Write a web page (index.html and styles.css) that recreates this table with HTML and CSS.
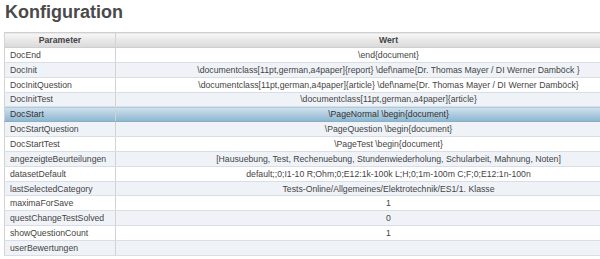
FILE: index.html
```html
<!DOCTYPE html>
<html lang="de">
<head>
<meta charset="utf-8">
<title>Konfiguration</title>
<link rel="stylesheet" href="styles.css">
</head>
<body>
<h1 class="title">Konfiguration</h1>
<div class="table-clip">
<table class="config">
  <thead>
    <tr><th class="col-param">Parameter</th><th class="col-value">Wert</th></tr>
  </thead>
  <tbody>
    <tr><td>DocEnd</td><td>\end{document}</td></tr>
    <tr><td>DocInit</td><td>\documentclass[11pt,german,a4paper]{report} \def\name{Dr. Thomas Mayer / DI Werner Damböck }</td></tr>
    <tr><td>DocInitQuestion</td><td>\documentclass[11pt,german,a4paper]{article} \def\name{Dr. Thomas Mayer / DI Werner Damböck}</td></tr>
    <tr><td>DocInitTest</td><td>\documentclass[11pt,german,a4paper]{article}</td></tr>
    <tr class="selected"><td>DocStart</td><td>\PageNormal \begin{document}</td></tr>
    <tr><td>DocStartQuestion</td><td>\PageQuestion \begin{document}</td></tr>
    <tr><td>DocStartTest</td><td>\PageTest \begin{document}</td></tr>
    <tr><td>angezeigteBeurteilungen</td><td>[Hausuebung, Test, Rechenuebung, Stundenwiederholung, Schularbeit, Mahnung, Noten]</td></tr>
    <tr><td>datasetDefault</td><td>default;;0;I1-10 R;Ohm;0;E12:1k-100k L;H;0;1m-100m C;F;0;E12:1n-100n</td></tr>
    <tr><td>lastSelectedCategory</td><td>Tests-Online/Allgemeines/Elektrotechnik/ES1/1. Klasse</td></tr>
    <tr><td>maximaForSave</td><td>1</td></tr>
    <tr><td>questChangeTestSolved</td><td>0</td></tr>
    <tr><td>showQuestionCount</td><td>1</td></tr>
    <tr><td>userBewertungen</td><td></td></tr>
  </tbody>
</table>
</div>
</body>
</html>
```
FILE: styles.css
```css
html, body {
  overflow: hidden;
}
body {
  margin: 0;
  padding: 0 0 0 4px;
  font-family: "Liberation Sans", Arial, sans-serif;
  color: #444;
  background: #fff;
}
.title {
  margin: 0;
  padding: 2px 0 0 1px;
  height: 32px;
  box-sizing: border-box;
  font-size: 18px;
  line-height: 20px;
  font-weight: bold;
  color: #4a4a4a;
}
.table-clip {
  overflow: hidden;
  width: 596px;
}
.config {
  border-collapse: collapse;
  width: 657px;
  font-size: 8.7px;
  color: #444;
}
.config th {
  height: 14px;
  padding: 0;
  font-weight: bold;
  color: #444;
  background: linear-gradient(#f7f7f7, #d9d9d9);
  border-top: 1px solid #cfcfcf;
  border-bottom: 1px solid #cfcfcf;
  border-left: 1px solid #d4d4d4;
  text-align: center;
}
.config th.col-param {
  width: 110px;
}
.config td {
  height: 12.85px;
  padding: 1px 0 0 5px;
  line-height: 11px;
  border-bottom: 1px solid #d9dee5;
  border-left: 1px solid #d2d2d2;
  white-space: nowrap;
}
.config td:nth-child(2) {
  text-align: center;
  padding: 1px 0 0 0;
}
.config tbody tr:nth-child(even) td {
  background: #eff3f8;
}
.config tbody tr:nth-child(odd) td {
  background: #fff;
}
.config tbody tr.selected td {
  background: linear-gradient(#d0e2ee, #8cb5cf);
  color: #333;
  border-top: 1px solid #b3cfe0;
  border-bottom: 1px solid #86afca;
}
```
